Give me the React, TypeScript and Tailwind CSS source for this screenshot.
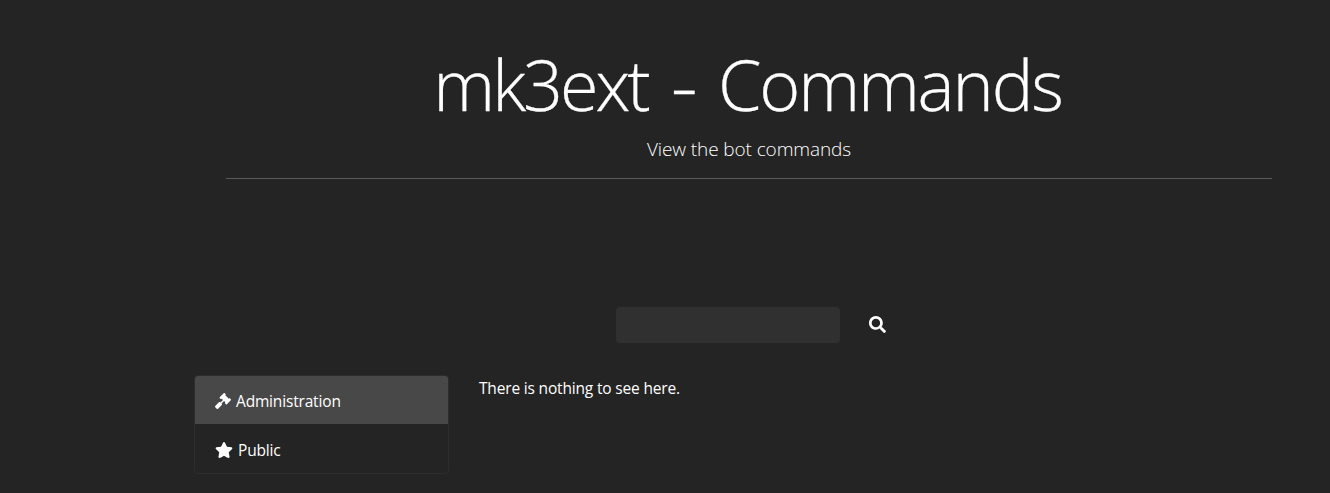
import { FaGavel, FaStar, FaSearch } from "react-icons/fa";

export default function App() {
  return (
    <div className="h-[493px] overflow-hidden bg-[#242424] pl-[194px] font-['Open_Sans',sans-serif] text-[15.5px] tracking-[-0.17px] text-white">
      <header className="ml-8 flex h-[179px] w-[1046px] flex-col items-center border-b border-[#5a5a5a] pt-[36px]">
        <h1 className="mr-[3px] flex h-[98px] items-start justify-center gap-[23px] text-[70px] leading-[96px] font-light whitespace-nowrap [-webkit-text-stroke:0.3px_white]">
          <span className="mr-0.5 tracking-[-3px]">mk3ext</span>
          <span className="scale-x-120">-</span>
          <span className="tracking-[-2.15px]">Commands</span>
        </h1>
        <p className="text-[19px] leading-[30px] font-light tracking-[-0.1px]">View the bot commands</p>
      </header>
      <div className="mt-32 ml-[422px] flex h-9 items-center">
        <input className="h-9 w-56 rounded bg-[#303030] px-3 outline-none" />
        <button className="mb-0.5 ml-[29px]"><FaSearch size={17} /></button>
      </div>
      <main className="mt-8 flex">
        <nav className="h-[99px] w-[255px] overflow-hidden rounded border border-[#2d2d2d]">
          <a className="flex h-12 items-center gap-[5px] bg-[#484848] pt-0.5 pl-5"><FaGavel size={16} /><span className="pt-0.5">Administration</span></a>
          <a className="flex h-[49px] items-center gap-[5px] pt-0.5 pl-5"><FaStar size={18} /><span className="pt-0.5">Public</span></a>
        </nav>
        <p className="mt-px ml-[30px] leading-6">There is nothing to see here.</p>
      </main>
    </div>
  );
}
